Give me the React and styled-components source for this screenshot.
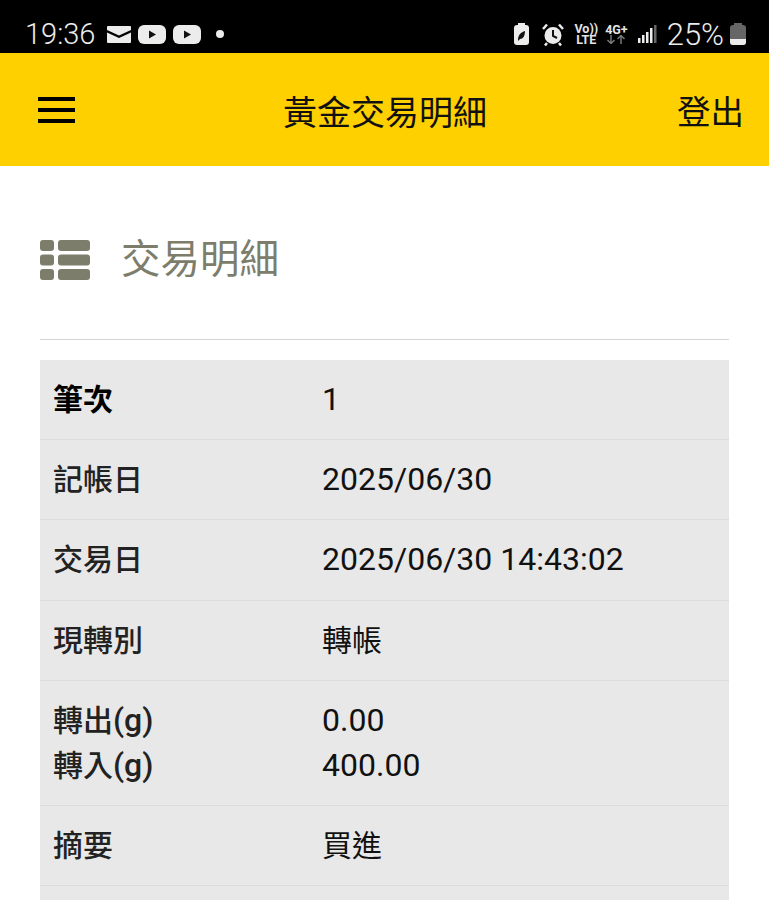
import React from 'react';
import styled, { createGlobalStyle } from 'styled-components';

const GlobalStyle = createGlobalStyle`
  html, body {
    margin: 0;
    padding: 0;
    height: 900px;
    overflow: hidden;
    background: #fff;
    font-family: Roboto, "Noto Sans CJK TC", sans-serif;
  }
`;

const StatusBar = styled.div`
  height: 53px;
  background: #000;
  color: #ececec;
  display: flex;
  align-items: center;
  justify-content: space-between;
  padding: 15px 23px 0 25px;
  box-sizing: border-box;
`;

const StatusGroup = styled.div`
  display: flex;
  align-items: center;
  gap: ${(p) => p.$gap}px;
`;

const Clock = styled.span`
  font-size: 29px;
  font-weight: 300;
  line-height: 1;
  margin-right: 5px;
`;

const Percent = styled.span`
  font-size: 31px;
  font-weight: 300;
  line-height: 1;
  margin: 0 -5px 0 -1px;
`;

const TinyStack = styled.span`
  display: flex;
  flex-direction: column;
  align-items: center;
  margin: ${(p) => p.$margin || 0};
  font-size: 12.5px;
  font-weight: 700;
  line-height: 11px;
  color: #e4e4e4;
`;

const IconSlot = styled.span`
  display: flex;
  margin: ${(p) => p.$margin || 0};
`;

const Header = styled.header`
  height: 113px;
  background: #ffd000;
  display: grid;
  grid-template-columns: 1fr auto 1fr;
  align-items: center;
  padding: 0 25px 0 38px;
  color: #111;
`;

const MenuButton = styled.div`
  width: 37px;
  height: 26px;
  display: flex;
  flex-direction: column;
  justify-content: space-between;

  span {
    height: 4px;
    background: #000;
  }
`;

const HeaderTitle = styled.h1`
  margin: 6px 12px 0 0;
  font-size: 34px;
  font-weight: 400;
  line-height: 1;
`;

const Logout = styled.div`
  justify-self: end;
  margin-top: 6px;
  font-size: 33.5px;
  line-height: 1;
`;

const Main = styled.main`
  padding: 0 40px;
`;

const SectionTitle = styled.div`
  height: 174px;
  box-sizing: border-box;
  border-bottom: 1px solid #d5d5d5;
  display: flex;
  align-items: center;
  gap: 31px;
  padding-top: 15px;
  margin-bottom: 20px;
  color: #7d7d6b;

  h2 {
    margin: 0;
    font-size: 39.5px;
    font-weight: 400;
    line-height: 1;
  }
`;

const Table = styled.div`
  background: #e8e8e8;
`;

const Row = styled.div`
  display: grid;
  grid-template-columns: 269px 1fr;
  align-items: center;
  padding: 17px 13px;
  border-bottom: 1px solid #dcdcdc;
  font-size: 30px;
  line-height: 45.2px;
  color: #111;
`;

const RowLabel = styled.div`
  font-weight: ${(p) => (p.$strong ? 700 : 500)};
  color: ${(p) => (p.$strong ? '#000' : '#222')};
`;

const RowValue = styled.div`
  font-weight: 400;
  font-size: ${(p) => (p.$latin ? 32 : 30)}px;
`;

const Unit = styled.span`
  font-size: 32px;
`;

const MailIcon = () => (
  <svg width="24" height="17" viewBox="0 0 24 17">
    <path d="M1 0h22a1 1 0 0 1 1 1v3l-12 5.500L0 4V1a1 1 0 0 1 1-1z" fill="#ececec" />
    <path d="M0 6.500l12 5.500 12-5.500V16a1 1 0 0 1-1 1H1a1 1 0 0 1-1-1z" fill="#ececec" />
  </svg>
);

const PlayIcon = () => (
  <svg width="28" height="19" viewBox="0 0 28 19">
    <rect width="28" height="19" rx="6" fill="#ececec" />
    <path d="M11 5.500l7 4-7 4z" fill="#111" />
  </svg>
);

const SaverBatteryIcon = () => (
  <svg width="15" height="22" viewBox="0 0 15 22">
    <rect x="4" y="0" width="7" height="3" fill="#ececec" />
    <rect x="0" y="2" width="15" height="20" rx="3" fill="#ececec" />
    <path d="M4 17c0-5 3-8 7-9 0 5-2 8-5 8l-2 2z" fill="#111" />
  </svg>
);

const AlarmIcon = () => (
  <svg width="22" height="23" viewBox="0 0 22 23">
    <circle cx="11" cy="12.500" r="8.500" fill="#ececec" />
    <path d="M1 6l4-4.500M21 6l-4-4.500M5 20l-2 2.500M17 20l2 2.500" stroke="#ececec" strokeWidth="2.500" />
    <path d="M11 7v6l4 2" fill="none" stroke="#111" strokeWidth="2" />
  </svg>
);

const ArrowsIcon = () => (
  <svg width="22" height="9" viewBox="0 0 22 9">
    <path d="M6 0v8M2.500 5L6 8.500 9.500 5" fill="none" stroke="#777" strokeWidth="1.500" />
    <path d="M16 9V1M12.500 4L16 .5 19.500 4" fill="none" stroke="#777" strokeWidth="1.500" />
  </svg>
);

const SignalIcon = () => (
  <svg width="19" height="18" viewBox="0 0 19 18">
    <rect x="0" y="13" width="2.500" height="5" fill="#ececec" />
    <rect x="4" y="10" width="2.500" height="8" fill="#ececec" />
    <rect x="8" y="7" width="2.500" height="11" fill="#ececec" />
    <rect x="12" y="3" width="2.500" height="15" fill="#ececec" />
    <rect x="16" y="0" width="2.500" height="18" fill="#666" />
  </svg>
);

const BatteryIcon = () => (
  <svg width="16" height="22" viewBox="0 0 16 22">
    <rect x="4" y="0" width="8" height="3" fill="#666" />
    <rect x="0" y="2" width="16" height="20" rx="3" fill="#666" />
    <path d="M0 16h16v3a3 3 0 0 1-3 3H3a3 3 0 0 1-3-3z" fill="#ececec" />
  </svg>
);

const DotIcon = styled.span`
  width: 8px;
  height: 8px;
  margin-left: 8px;
  border-radius: 50%;
  background: #ececec;
`;

const ListIcon = () => (
  <svg width="50" height="40" viewBox="0 0 50 40">
    <rect x="0" y="0" width="14" height="11" rx="3" fill="#7d7d6b" />
    <rect x="0" y="14.500" width="14" height="11" rx="3" fill="#7d7d6b" />
    <rect x="0" y="29" width="14" height="11" rx="3" fill="#7d7d6b" />
    <rect x="18" y="0" width="32" height="11" rx="3" fill="#7d7d6b" />
    <rect x="18" y="14.500" width="32" height="11" rx="3" fill="#7d7d6b" />
    <rect x="18" y="29" width="32" height="11" rx="3" fill="#7d7d6b" />
  </svg>
);

const rows = [
  { label: [['筆次']], value: ['1'], strong: true, latin: true },
  { label: [['記帳日']], value: ['2025/06/30'], latin: true },
  { label: [['交易日']], value: ['2025/06/30 14:43:02'], latin: true },
  { label: [['現轉別']], value: ['轉帳'] },
  { label: [['轉出', '(g)'], ['轉入', '(g)']], value: ['0.00', '400.00'], latin: true },
  { label: [['摘要']], value: ['買進'] },
  { label: [['\u00a0']], value: ['\u00a0'] },
];

export default function App() {
  return (
    <>
      <GlobalStyle />
      <StatusBar>
        <StatusGroup $gap={7}>
          <Clock>19:36</Clock>
          <MailIcon />
          <PlayIcon />
          <PlayIcon />
          <DotIcon />
        </StatusGroup>
        <StatusGroup $gap={11}>
          <IconSlot $margin="0 2px 0 0">
            <SaverBatteryIcon />
          </IconSlot>
          <AlarmIcon />
          <TinyStack $margin="0 -4px 0 -1px">
            <span>Vo))</span>
            <span>LTE</span>
          </TinyStack>
          <TinyStack>
            <span>4G+</span>
            <ArrowsIcon />
          </TinyStack>
          <IconSlot $margin="0 0 0 -1px">
            <SignalIcon />
          </IconSlot>
          <Percent>25%</Percent>
          <BatteryIcon />
        </StatusGroup>
      </StatusBar>
      <Header>
        <MenuButton>
          <span />
          <span />
          <span />
        </MenuButton>
        <HeaderTitle>黃金交易明細</HeaderTitle>
        <Logout>登出</Logout>
      </Header>
      <Main>
        <SectionTitle>
          <ListIcon />
          <h2>交易明細</h2>
        </SectionTitle>
        <Table>
          {rows.map((row, i) => (
            <Row key={i}>
              <RowLabel $strong={row.strong}>
                {row.label.map(([name, unit]) => (
                  <div key={name}>
                    {name}
                    {unit && <Unit>{unit}</Unit>}
                  </div>
                ))}
              </RowLabel>
              <RowValue $latin={row.latin}>
                {row.value.map((t) => (
                  <div key={t}>{t}</div>
                ))}
              </RowValue>
            </Row>
          ))}
        </Table>
      </Main>
    </>
  );
}
